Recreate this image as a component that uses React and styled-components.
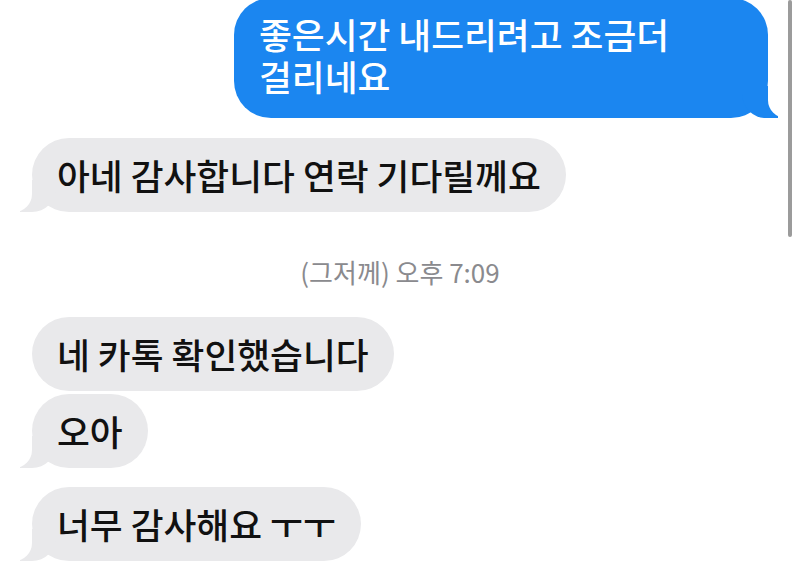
import React from 'react';
import styled, { createGlobalStyle } from 'styled-components';

const GlobalStyle = createGlobalStyle`
  html, body {
    margin: 0;
    padding: 0;
    background: #ffffff;
  }
  body {
    font-family: "Noto Sans CJK KR", "Noto Sans", sans-serif;
  }
`;

const Screen = styled.div`
  position: relative;
  width: 800px;
  height: 563px;
  overflow: hidden;
  background: #ffffff;
`;

const Thread = styled.div`
  display: flex;
  flex-direction: column;
  align-items: flex-start;
  padding: 0 32px;
`;

const Bubble = styled.div`
  position: relative;
  z-index: 0;
  box-sizing: border-box;
  max-width: 534px;
  padding: ${({ mine }) => (mine ? '15px 25px 21px' : '16px 25px 17px')};
  border-radius: 37px;
  font-size: 35.7px;
  font-weight: 500;
  line-height: ${({ mine }) => (mine ? '42px' : '41px')};
  word-break: keep-all;
  background: ${({ mine }) => (mine ? '#1b86f0' : '#e9e9eb')};
  color: ${({ mine }) => (mine ? '#ffffff' : '#111111')};
  align-self: ${({ mine }) => (mine ? 'flex-end' : 'flex-start')};
  margin-top: ${({ gap }) => gap || 0}px;

  ${({ tail, mine }) =>
    tail &&
    `
    &::before {
      content: "";
      position: absolute;
      z-index: -1;
      bottom: 0;
      ${mine ? 'right: -10px;' : 'left: -12px;'}
      width: 36px;
      height: 32px;
      background: ${mine ? '#1b86f0' : '#e9e9eb'};
      ${mine ? 'border-bottom-left-radius: 24px;' : 'border-bottom-right-radius: 24px;'}
    }
    &::after {
      content: "";
      position: absolute;
      z-index: -1;
      bottom: 0;
      ${mine ? 'right: -30px;' : 'left: -30px;'}
      width: 30px;
      height: 32px;
      background: #ffffff;
      ${mine ? 'border-bottom-left-radius: 18px;' : 'border-bottom-right-radius: 18px;'}
    }
  `}
`;

const Stamp = styled.div`
  align-self: center;
  margin: 46px 0 31px;
  font-size: 26px;
  line-height: 28px;
  color: #8a8a8e;
`;

const ScrollThumb = styled.div`
  position: absolute;
  top: 0;
  right: 8px;
  width: 4px;
  height: 237px;
  border-radius: 2px;
  background: #9b9b9b;
`;

export default function App() {
  return (
    <Screen>
      <GlobalStyle />
      <Thread>
        <Bubble mine tail gap={-2}>
          좋은시간 내드리려고 조금더 걸리네요
        </Bubble>
        <Bubble tail gap={20}>
          아네 감사합니다 연락 기다릴께요
        </Bubble>
        <Stamp>(그저께) 오후 7:09</Stamp>
        <Bubble>네 카톡 확인했습니다</Bubble>
        <Bubble tail gap={3}>
          오아
        </Bubble>
        <Bubble tail gap={19}>
          너무 감사해요 ㅜㅜ
        </Bubble>
      </Thread>
      <ScrollThumb />
    </Screen>
  );
}
